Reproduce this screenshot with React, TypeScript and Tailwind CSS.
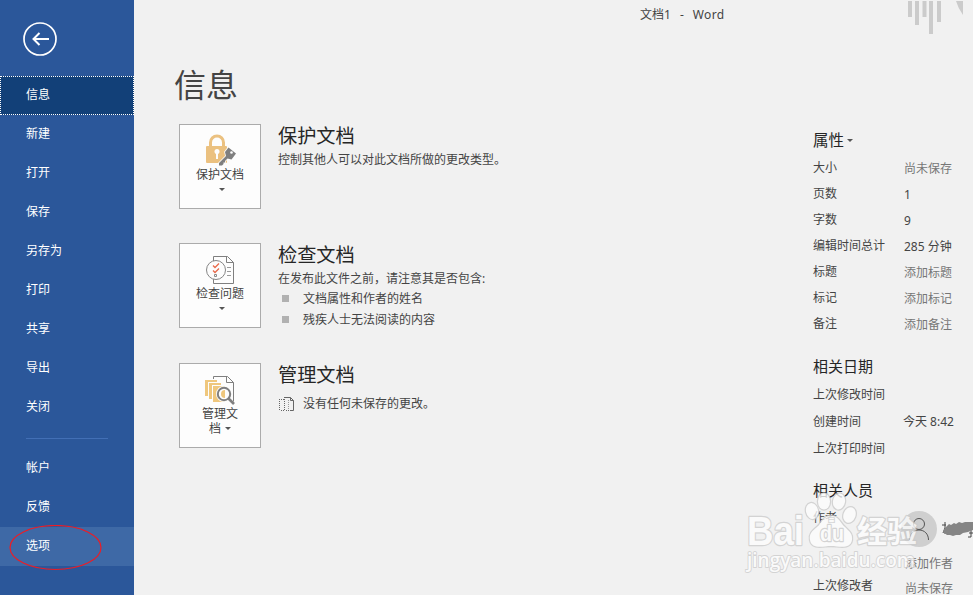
import type { ReactNode } from 'react'

const topMenu = ['信息', '新建', '打开', '保存', '另存为', '打印', '共享', '导出', '关闭']
const bottomMenu = ['帐户', '反馈', '选项']

const properties = [
  { label: '大小', value: '尚未保存', muted: true },
  { label: '页数', value: '1', muted: false },
  { label: '字数', value: '9', muted: false },
  { label: '编辑时间总计', value: '285 分钟', muted: false },
  { label: '标题', value: '添加标题', muted: true },
  { label: '标记', value: '添加标记', muted: true },
  { label: '备注', value: '添加备注', muted: true },
]

const dates = [
  { label: '上次修改时间', value: '' },
  { label: '创建时间', value: '今天 8:42' },
  { label: '上次打印时间', value: '' },
]

function Caret() {
  return (
    <svg width="6" height="3" viewBox="0 0 6 3" className="shrink-0" fill="#555">
      <path d="M0 0h6L3 3z" />
    </svg>
  )
}

function LockIcon() {
  return (
    <svg width="32" height="32" viewBox="0 0 32 32" fill="none">
      <path d="M5.500 13V8.500a6.500 6.500 0 0 1 13 0V13" stroke="#ebc180" strokeWidth="3" />
      <rect x="1" y="12" width="21" height="17" rx="1" fill="#ebc180" />
      <circle cx="12" cy="17.500" r="2.500" fill="#fdfdfd" />
      <path d="M11 18h2v7h-2z" fill="#fdfdfd" />
      <path
        d="m23.500 13.500 7.500 6-4.500 6-4-1-2.500 2.500v1.500h-1.500v1.500L17 31.500h-3V29l7-7-1-4z"
        fill="#7f7f7f"
        stroke="#fdfdfd"
        strokeWidth="1.600"
        paintOrder="stroke"
      />
      <circle cx="26.500" cy="18.500" r="1.300" fill="#fdfdfd" />
    </svg>
  )
}

function InspectIcon() {
  return (
    <svg width="32" height="32" viewBox="0 0 32 32" fill="none">
      <path d="M8.500 3.500h14l6 6v21h-20z" fill="#fdfdfd" stroke="#7f7f7f" />
      <path d="M21.500 3.500v6h7" stroke="#7f7f7f" />
      <path d="M22 14.500h4M22 18.500h4M22 22.500h4" stroke="#9a9a9a" />
      <circle cx="11" cy="17" r="9.500" fill="#fdfdfd" stroke="#858585" />
      <path d="m8 12.500 2 2 4-4M8 17.500l2 2 4-4" stroke="#e8694a" strokeWidth="1.300" />
      <path d="M9.500 21.500h2v2h-2z" stroke="#8a8a8a" />
    </svg>
  )
}

function ManageIcon() {
  return (
    <svg width="32" height="32" viewBox="0 0 32 32" fill="none">
      <path d="M8.500 6V3.500h14l6 6v19" stroke="#7f7f7f" />
      <path d="M21.500 3.500v6h7" stroke="#7f7f7f" />
      <path d="M0 7h12v2H3v14H0zM4 10h12v2H7v14H4zM8 13h12v16H8z" fill="#efc77d" />
      <circle cx="19" cy="21" r="6.500" fill="#fdfdfd" stroke="#fdfdfd" strokeWidth="3" />
      <path d="M20 17a4 4 0 0 0 0 8z" fill="#efc77d" />
      <circle cx="19" cy="21" r="6.200" stroke="#7f7f7f" strokeWidth="2" />
      <path d="m23.500 25.500 5.500 5.500" stroke="#7f7f7f" strokeWidth="2.600" />
    </svg>
  )
}

function DraftIcon() {
  return (
    <svg width="15" height="14" viewBox="0 0 15 14" fill="none" stroke="#666" className="shrink-0">
      <path d="M5 .5h6.500l3 3v10H11" />
      <path d="M11.500.5v3h3" />
      <path d="M5.500 2v12M.5 2v12M2 2.500h3M2 13.500h3M7 13.500h3" strokeDasharray="1 1" />
      <path d="M9.500 3v10" strokeDasharray="1 1" stroke="#999" />
    </svg>
  )
}

function Tile({ icon, children }: { icon: ReactNode; children: ReactNode }) {
  return (
    <button className="flex h-[85px] w-[82px] shrink-0 flex-col items-center border border-[#ababab] bg-[#fdfdfd] pt-[9px] text-xs leading-[15px] text-[#444]">
      <span className="mb-[1px] ml-[2px]">{icon}</span>
      {children}
    </button>
  )
}

function MenuItem({ label }: { label: string }) {
  const state =
    label === '信息'
      ? 'bg-[#124078] outline-1 -outline-offset-1 outline-dotted outline-white'
      : label === '选项'
        ? 'bg-[#3e69a6]'
        : ''
  return <li className={`flex h-[39px] items-center pb-[2px] pl-[26px] ${state}`}>{label}</li>
}

function Sidebar() {
  return (
    <nav className="relative w-[134px] shrink-0 bg-[#2b579a] pt-[22px] text-xs text-white">
      <svg className="ml-[23px]" width="34" height="34" viewBox="0 0 34 34" fill="none" stroke="#fff" strokeWidth="2">
        <circle cx="17" cy="17" r="16" strokeWidth="1.700" />
        <path d="M26 17H10.500M16.500 11l-6 6 6 6" />
      </svg>
      <ul className="mt-5">
        {topMenu.map((label) => (
          <MenuItem key={label} label={label} />
        ))}
      </ul>
      <div className="mt-[11px] ml-[26px] h-px w-[82px] bg-[#426fb5]" />
      <ul className="mt-[10px]">
        {bottomMenu.map((label) => (
          <MenuItem key={label} label={label} />
        ))}
      </ul>
      <svg className="absolute top-[525px] left-[9px]" width="94" height="46" fill="none">
        <ellipse cx="46.500" cy="22.500" rx="45.500" ry="22" stroke="#ee1c24" strokeWidth="1.200" />
      </svg>
    </nav>
  )
}

function Watermark() {
  return (
    <svg className="absolute top-[490px] left-[740px]" width="190" height="90" viewBox="740 490 190 90">
      <g fill="#fdfdfd" stroke="#cbcbcb" strokeWidth="2.400" strokeLinejoin="round" paintOrder="stroke" opacity=".78">
        <ellipse cx="812" cy="511" rx="6" ry="8" transform="rotate(-12 812 511)" />
        <ellipse cx="824" cy="501.500" rx="6" ry="8" />
        <ellipse cx="839" cy="501.500" rx="6" ry="8" transform="rotate(10 839 501.500)" />
        <ellipse cx="849.500" cy="515" rx="6" ry="8" transform="rotate(20 849.500 515)" />
        <path d="M831 516c-8 0-9 7-14 11-5 4-8 7-7 13 2 10 13 6 21 6s19 4 21-6c1-6-3-9-7-13-5-4-6-11-14-11z" />
        <g fontFamily="Liberation Sans, sans-serif" fontWeight="bold">
          <text x="747" y="544.500" fontSize="41" textLength="57" lengthAdjust="spacingAndGlyphs">
            Bai
          </text>
          <text x="820" y="540.500" fontSize="22" textLength="24" lengthAdjust="spacingAndGlyphs">
            du
          </text>
        </g>
        <text
          x="747"
          y="567"
          fontSize="20"
          fontFamily="Open Sans, sans-serif"
          fontWeight="600"
          textLength="168"
          lengthAdjust="spacingAndGlyphs"
          strokeWidth="1.800"
        >
          jingyan.baidu.com
        </text>
        <text x="857" y="541.500" fontSize="30" fontWeight="bold" fontFamily="Noto Sans CJK SC, sans-serif">
          经验
        </text>
      </g>
    </svg>
  )
}

export default function App() {
  return (
    <div className="relative flex h-[595px] w-[973px] overflow-hidden bg-[#f1f1f1] font-['Noto_Sans','Noto_Sans_CJK_SC',sans-serif] text-xs text-[#444]">
      <Sidebar />

      <main className="flex flex-1 flex-col">
        <header className="flex h-[65px] shrink-0 items-start">
          <h1 className="mt-[6px] ml-[506px] flex w-[267px] gap-[9px] leading-[18px]">
            <span>文档1</span>
            <span>-</span>
            <span className="tracking-[0.4px]">Word</span>
          </h1>
          <svg width="66" height="36" viewBox="0 0 66 36" fill="#cbcbcb">
            <path d="M1 1h4v16H1zM8 1h4v24H8zM15.500 1h4v16h-4zM22 1h4v33h-4zM30 1h4v21h-4zM49 1h7v14q-5-7-7-14z" />
          </svg>
        </header>

        <div className="flex">
          <div className="w-[679px] shrink-0 pl-[45px]">
            <h2 className="-mt-[2px] -ml-[5px] h-[61px] text-[32px] leading-[44px]">信息</h2>

            <section className="flex h-[119px] gap-[17px]">
              <Tile icon={<LockIcon />}>
                保护文档
                <span className="mt-[6px] ml-[3px]">
                  <Caret />
                </span>
              </Tile>
              <div>
                <h3 className="text-[19.2px] leading-[24px] text-[#262626]">保护文档</h3>
                <p className="mt-[2px] leading-[20px]">控制其他人可以对此文档所做的更改类型。</p>
              </div>
            </section>

            <section className="flex h-[120px] gap-[17px]">
              <Tile icon={<InspectIcon />}>
                检查问题
                <span className="mt-[6px] ml-[3px]">
                  <Caret />
                </span>
              </Tile>
              <div>
                <h3 className="text-[19.2px] leading-[24px] text-[#262626]">检查文档</h3>
                <p className="mt-[2px] leading-[20px]">在发布此文件之前，请注意其是否包含:</p>
                <ul className="-mt-[1px] leading-[21px]">
                  {['文档属性和作者的姓名', '残疾人士无法阅读的内容'].map((text) => (
                    <li key={text} className="flex items-center gap-[14px] pl-1">
                      <span className="size-[7px] bg-[#b1b1b1]" />
                      {text}
                    </li>
                  ))}
                </ul>
              </div>
            </section>

            <section className="flex gap-[17px]">
              <Tile icon={<ManageIcon />}>
                管理文
                <span className="flex items-center gap-1">
                  档<Caret />
                </span>
              </Tile>
              <div>
                <h3 className="text-[19.2px] leading-[24px] text-[#262626]">管理文档</h3>
                <p className="mt-[6px] flex items-center gap-[9px] pl-[1px] leading-[22px]">
                  <DraftIcon />
                  没有任何未保存的更改。
                </p>
              </div>
            </section>
          </div>

          <aside className="w-[160px] shrink-0 pt-[61px]">
            <h3 className="flex h-[29px] items-center gap-[3px] text-[15.5px] text-[#262626]">
              属性 <Caret />
            </h3>
            <dl>
              {properties.map(({ label, value, muted }) => (
                <div key={label} className="flex h-[26px] leading-[26px]">
                  <dt className="w-[91px]">{label}</dt>
                  <dd className={`pt-[1px] ${muted ? 'text-[#767676]' : ''}`}>{value}</dd>
                </div>
              ))}
            </dl>

            <h3 className="mt-[17px] h-[24px] text-[15px] leading-[24px] text-[#262626]">相关日期</h3>
            <dl className="pt-[3px]">
              {dates.map(({ label, value }) => (
                <div key={label} className="flex h-[27px] leading-[27px]">
                  <dt className="w-[90px]">{label}</dt>
                  <dd>{value}</dd>
                </div>
              ))}
            </dl>

            <h3 className="mt-[16px] h-[25px] text-[15px] leading-[24px] text-[#262626]">相关人员</h3>
            <div className="flex h-[50px]">
              <span className="w-[88px] pt-[5px] leading-[20px]">作者</span>
              <svg className="mt-[8px] shrink-0" width="36" height="36" viewBox="0 0 36 36" fill="none">
                <circle cx="18" cy="18" r="18" fill="#cfcfcf" />
                <circle cx="18" cy="13" r="5.500" stroke="#555" />
                <path d="M8.500 29c0-6 4-10 9.500-10s9.500 4 9.500 10" stroke="#555" />
              </svg>
              <svg className="mt-[17px] ml-[5px] shrink-0" width="31" height="20" viewBox="0 0 31 20">
                <path d="M0 5h4M3 2v12M1 13l2-5M27 13h4M29 10v7h-3" stroke="#444" fill="none" />
                <path d="M2 9 7 4l2 1 3-2 2 1 3-2 3 1 3-1 8 0v8l-5 2-5 1-3 2-4 0-3 1-3-1-3 0-4-3z" fill="#858585" />
              </svg>
            </div>
            <div className="pl-[92px] leading-[22px] text-[#767676]">添加作者</div>
            <div className="flex leading-[22px]">
              <span className="w-[92px]">上次修改者</span>
              <span className="pt-[3px] text-[#767676]">尚未保存</span>
            </div>
          </aside>
        </div>
      </main>

      <Watermark />
    </div>
  )
}
